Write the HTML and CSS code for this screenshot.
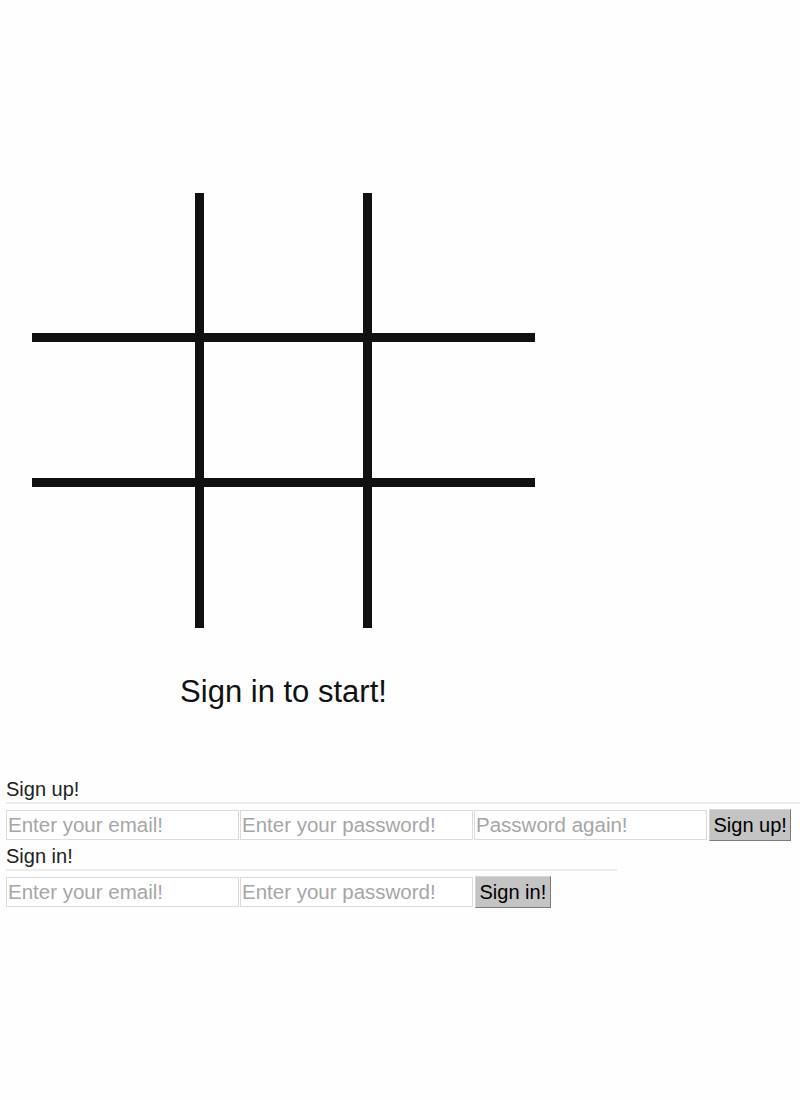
FILE: index.html
```html
<!DOCTYPE html>
<html>
<head>
<meta charset="utf-8">
<title>Tic Tac Toe</title>
<link rel="stylesheet" href="styles.css">
</head>
<body>
<div class="game">
  <svg class="board" width="503" height="435" viewBox="0 0 503 435">
    <rect x="163" y="0" width="9" height="435" fill="#111"/>
    <rect x="331" y="0" width="9" height="435" fill="#111"/>
    <rect x="0" y="140" width="503" height="9" fill="#111"/>
    <rect x="0" y="285" width="503" height="9" fill="#111"/>
  </svg>
  <div class="status">Sign in to start!</div>
</div>
<div class="forms">
  <section class="form signup">
    <div class="form-title">Sign up!</div>
    <div class="row">
      <input class="field" type="text" placeholder="Enter your email!">
      <input class="field" type="password" placeholder="Enter your password!">
      <input class="field" type="password" placeholder="Password again!">
      <button class="btn">Sign up!</button>
    </div>
  </section>
  <section class="form signin">
    <div class="form-title">Sign in!</div>
    <div class="row">
      <input class="field" type="text" placeholder="Enter your email!">
      <input class="field" type="password" placeholder="Enter your password!">
      <button class="btn">Sign in!</button>
    </div>
  </section>
</div>
</body>
</html>
```
FILE: styles.css
```css
html, body {
  margin: 0;
  padding: 0;
  background: #fefefe;
  font-family: "Liberation Sans", Arial, sans-serif;
  color: #222;
}
.game {
  padding-top: 193px;
  padding-left: 32px;
}
.board {
  display: block;
}
.status {
  width: 503px;
  margin-top: 46px;
  text-align: center;
  font-size: 31px;
  line-height: 35px;
  color: #111;
}
.forms {
  margin-top: 69px;
  padding-left: 6px;
}
.form + .form {
  margin-top: 4px;
}
.signin {
  width: 611px;
}
.form-title {
  font-size: 20px;
  line-height: 22px;
  padding-bottom: 2px;
  border-bottom: 2px solid #ececec;
}
.row {
  display: flex;
  align-items: center;
  gap: 1px;
  margin-top: 5px;
  height: 32px;
}
.field {
  box-sizing: border-box;
  width: 233px;
  height: 30px;
  margin: 0;
  padding: 0 1px;
  border: 1px solid #dcdcdc;
  background: #fff;
  font-family: "Liberation Sans", Arial, sans-serif;
  font-size: 20.5px;
  color: #222;
  outline: none;
}
.field::placeholder {
  color: #a6a6a6;
}
.btn {
  box-sizing: border-box;
  height: 32px;
  margin: 0 0 0 1px;
  padding: 0 3.5px;
  background: #c4c4c4;
  border: 1px solid;
  border-color: #d6d6d6 #7a7a7a #7a7a7a #d6d6d6;
  border-radius: 0;
  font-family: "Liberation Sans", Arial, sans-serif;
  font-size: 20px;
  color: #000;
}
```
